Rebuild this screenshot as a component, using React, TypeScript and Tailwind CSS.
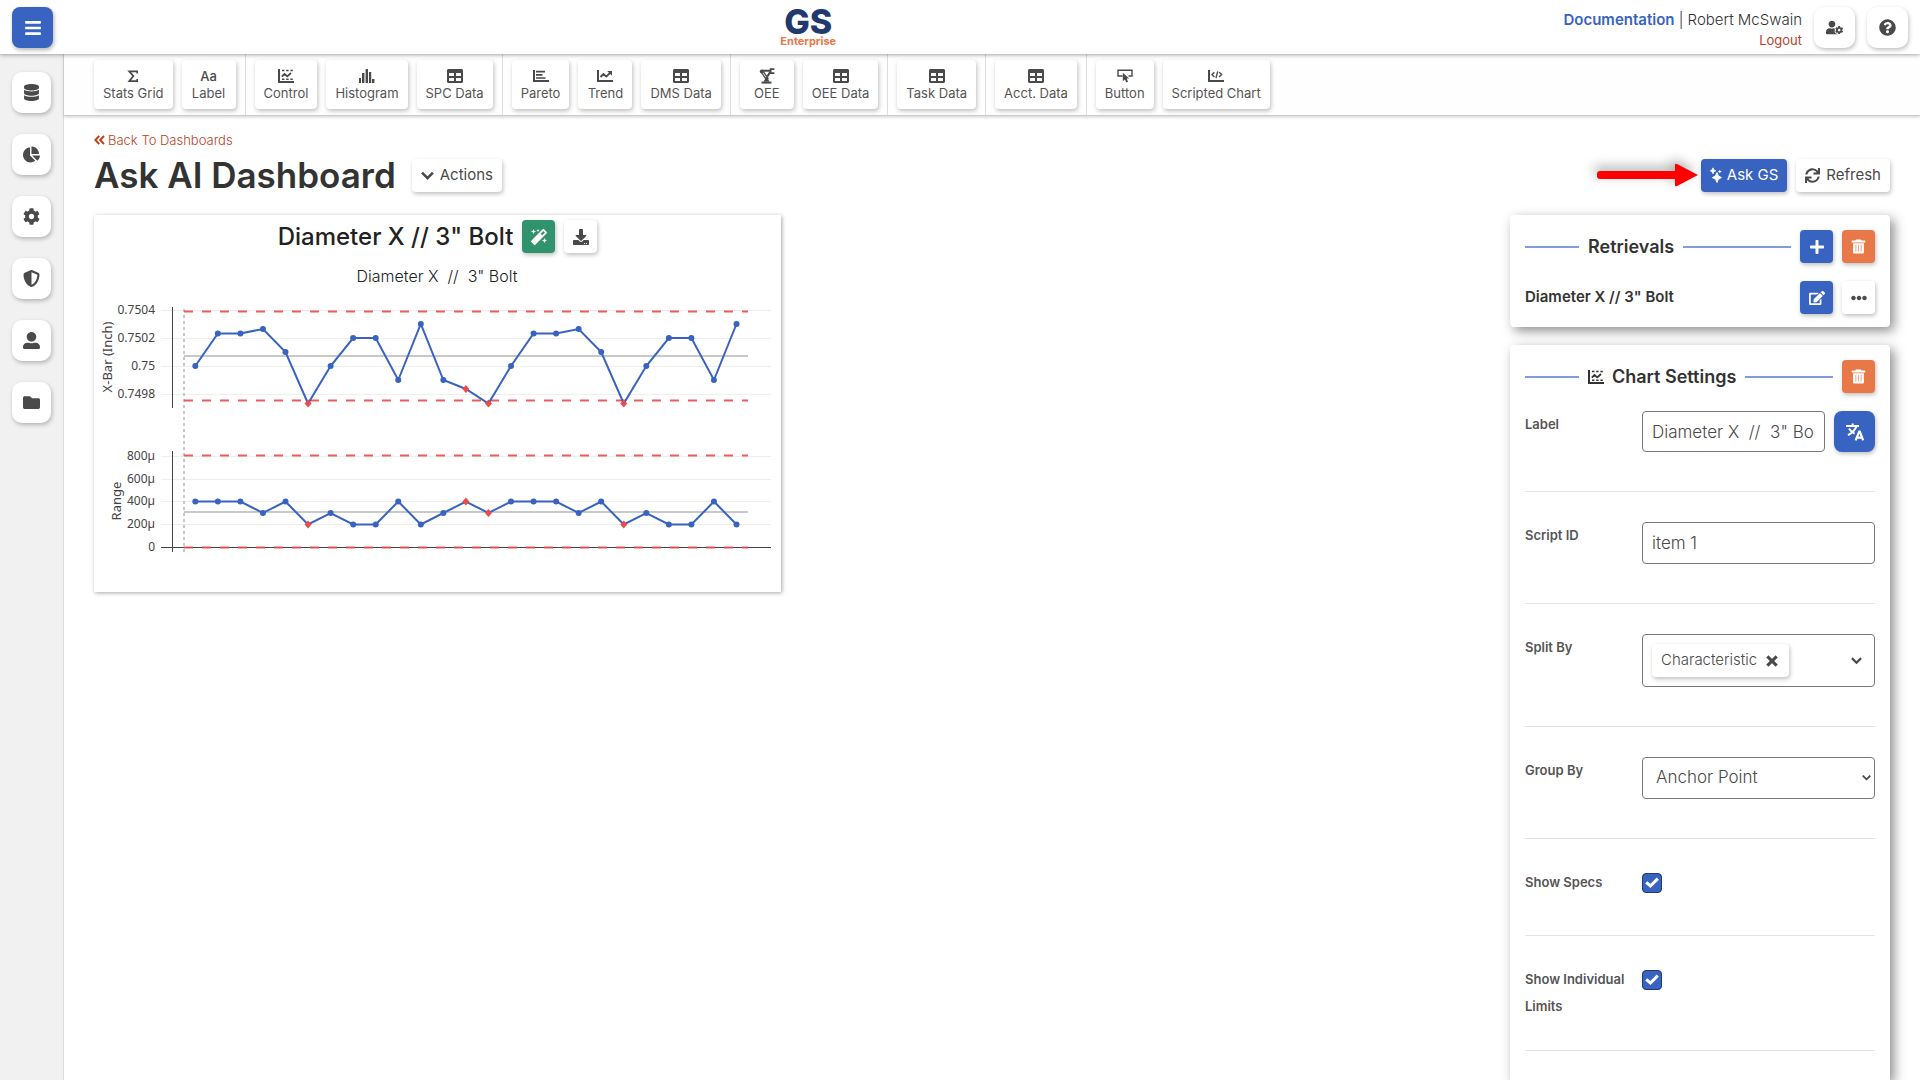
import type { ReactNode } from "react";
import {
  FaBars,
  FaChartPie,
  FaCog,
  FaDatabase,
  FaDownload,
  FaEdit,
  FaEllipsisH,
  FaFolder,
  FaMagic,
  FaPlus,
  FaQuestionCircle,
  FaSync,
  FaTable,
  FaUserAlt,
  FaUserCog,
} from "react-icons/fa";
import { FaShieldHalved } from "react-icons/fa6";

const SigmaIcon = () => (
  <svg width="16" height="16" viewBox="0 0 16 16" fill="none" stroke="currentColor" strokeWidth="1.7">
    <path d="M12.2 5.4V3.3H4.2L8.4 8.1L4.2 13.2H12.2V11" />
  </svg>
);

const ControlIcon = () => (
  <svg width="16" height="16" viewBox="0 0 16 16" fill="none" stroke="currentColor">
    <path d="M1 1V14H16" strokeWidth="2" />
    <path d="M4 2.5H16M4 11.2H16" strokeWidth="1.4" strokeDasharray="2.4 1.8" />
    <path d="M3.8 8.6L6.5 6L9.3 8.4L13 5" strokeWidth="1.8" />
  </svg>
);

const HistogramIcon = () => (
  <svg width="16" height="16" viewBox="0 0 16 16" fill="currentColor">
    <path d="M0 10h2v5H0zM3 5h2.4v10H3zM6.6 1h2.4v14H6.6zM10 4h2.2v11H10zM13 11h2.4v4H13z" />
  </svg>
);

const ParetoIcon = () => (
  <svg width="16" height="16" viewBox="0 0 16 16" fill="none" stroke="currentColor">
    <path d="M1 2V13H16" strokeWidth="2" />
    <path d="M3 3.6H12M3 6.8H9.5M3 10H12.5" strokeWidth="1.7" />
  </svg>
);

const TrendIcon = () => (
  <svg width="16" height="16" viewBox="0 0 16 16" fill="none" stroke="currentColor">
    <path d="M1 2V13H16" strokeWidth="2" />
    <path d="M3.5 9L6.5 6L9.3 8.6L13 5" strokeWidth="1.8" />
    <path d="M10.2 3H15V7.8Z" fill="currentColor" stroke="none" />
  </svg>
);

const RobotArmIcon = () => (
  <svg width="16" height="16" viewBox="0 0 16 16" fill="none" stroke="currentColor">
    <path d="M2.5 14.6H12.5" strokeWidth="2" />
    <path d="M4.5 13.8L6 11H9L10.5 13.8Z" fill="currentColor" stroke="none" />
    <path d="M2.6 4.6L7 11.2M4.4 3.6L8.6 9.8" strokeWidth="1.3" />
    <path d="M2.6 2.8H11M11 4.2L8.2 8.6" strokeWidth="2" />
    <path d="M15.4 1.2H11.6V5.2H15.4" strokeWidth="1.8" />
    <circle cx="2.8" cy="3.4" r="2" fill="currentColor" stroke="none" />
    <circle cx="7.8" cy="10.6" r="1.8" fill="currentColor" stroke="none" />
  </svg>
);

const ClickIcon = () => (
  <svg width="16" height="16" viewBox="0 0 16 16">
    <path d="M5.5 8H1V2.2H15V8H11.5" fill="none" stroke="currentColor" strokeWidth="1.4" />
    <path d="M5.8 4.8L12.2 10.6H9.7L11 13.8L9.4 14.6L7.9 11.5L5.8 13.2Z" fill="currentColor" />
  </svg>
);

const ScriptIcon = () => (
  <svg width="16" height="16" viewBox="0 0 16 16" fill="none" stroke="currentColor">
    <path d="M1 2V13H16" strokeWidth="2" />
    <path d="M6.4 4.2L4 6.6L6.4 9M11.2 4.2L13.6 6.6L11.2 9M9.7 3.4L8 10" strokeWidth="1.4" />
  </svg>
);

const TrashIcon = () => (
  <svg width="15" height="15" viewBox="0 0 16 16">
    <path d="M.8 1.6H4.6L5.6.6H10.4L11.4 1.6H15.2V3.6H.8Z" fill="currentColor" />
    <path d="M2.2 4.4H13.8V14.4Q13.8 15.4 12.8 15.4H3.2Q2.2 15.4 2.2 14.4Z" fill="currentColor" />
    <path d="M5.2 6.2V13.4M8 6.2V13.4M10.8 6.2V13.4" stroke="#f0a98a" strokeWidth="1.1" />
  </svg>
);

const SparkleIcon = () => (
  <svg width="12" height="16" viewBox="0 0 12 16" fill="currentColor">
    <path d="M7 5.5Q7.4 9.6 11.4 10.6Q7.4 11.6 7 15.5Q6.4 11.6 2.4 10.6Q6.4 9.6 7 5.5Z" stroke="currentColor" />
    <path d="M3 .8Q3.3 3.3 5.8 3.8Q3.3 4.3 3 6.8Q2.7 4.3.2 3.8Q2.7 3.3 3 .8Z" stroke="currentColor" strokeWidth=".8" />
    <path d="M9.8 2.4Q10 4.2 11.8 4.5Q10 4.8 9.8 6.6Q9.6 4.8 7.8 4.5Q9.6 4.2 9.8 2.4Z" />
  </svg>
);

const TranslateIcon = () => (
  <svg width="18" height="18" viewBox="0 0 18 18" fill="none" stroke="currentColor" strokeWidth="2">
    <path d="M0 3H13M6.6 .4V3M10.4 3.4Q8.6 8.6 2 12.2M3 5.6Q5 9 8.6 10.6" />
    <path d="M9.6 17.4L13.2 8.6H13.8L17.2 17.4M11 14.6H16" strokeWidth="2.2" />
  </svg>
);

const Chevron = ({ size, className = "" }: { size: number; className?: string }) => (
  <svg
    width={size}
    height={size}
    viewBox="0 0 12 12"
    fill="none"
    stroke="currentColor"
    strokeWidth="2.4"
    className={className}
  >
    <path d="M1 3.4L6 8.4L11 3.4" />
  </svg>
);

const CloseIcon = () => (
  <svg width="12" height="12" viewBox="0 0 11 11" stroke="currentColor" strokeWidth="2.8">
    <path d="M1.2 1.2L9.8 9.8M9.8 1.2L1.2 9.8" />
  </svg>
);

const BackIcon = () => (
  <svg width="11" height="10" viewBox="0 0 11 10" fill="none" stroke="currentColor" strokeWidth="2">
    <path d="M5.2 1L1.4 5L5.2 9M10 1L6.2 5L10 9" />
  </svg>
);

const navItems = [
  { name: "Data", icon: <FaDatabase /> },
  { name: "Dashboards", icon: <FaChartPie /> },
  { name: "Settings", icon: <FaCog /> },
  { name: "Security", icon: <FaShieldHalved /> },
  { name: "Users", icon: <FaUserAlt /> },
  { name: "Files", icon: <FaFolder /> },
];

const toolGroups: { name: string; icon: ReactNode }[][] = [
  [
    { name: "Stats Grid", icon: <SigmaIcon /> },
    { name: "Label", icon: <span className="text-[13px] leading-4 font-medium">Aa</span> },
  ],
  [
    { name: "Control", icon: <ControlIcon /> },
    { name: "Histogram", icon: <HistogramIcon /> },
    { name: "SPC Data", icon: <FaTable /> },
  ],
  [
    { name: "Pareto", icon: <ParetoIcon /> },
    { name: "Trend", icon: <TrendIcon /> },
    { name: "DMS Data", icon: <FaTable /> },
  ],
  [
    { name: "OEE", icon: <RobotArmIcon /> },
    { name: "OEE Data", icon: <FaTable /> },
  ],
  [{ name: "Task Data", icon: <FaTable /> }],
  [{ name: "Acct. Data", icon: <FaTable /> }],
  [
    { name: "Button", icon: <ClickIcon /> },
    { name: "Scripted Chart", icon: <ScriptIcon /> },
  ],
];

const xbarTicks = [
  { label: "0.7504", y: 95 },
  { label: "0.7502", y: 123 },
  { label: "0.75", y: 151 },
  { label: "0.7498", y: 179 },
];

const rangeTicks = [
  { label: "800µ", y: 241 },
  { label: "600µ", y: 264 },
  { label: "400µ", y: 286 },
  { label: "200µ", y: 309 },
  { label: "0", y: 332 },
];

const xbar = [
  151, 118.5, 118.5, 114, 137, 188.5, 151, 123, 123, 165, 109, 165, 174, 188.5, 151, 118.5, 118.5, 114, 137, 188.5,
  151, 123, 123, 165, 109,
];
const range = [
  286.5, 286.5, 286.5, 298, 286.5, 309.5, 298, 309.5, 309.5, 286.5, 309.5, 298, 286.5, 298, 286.5, 286.5, 286.5, 298,
  286.5, 309.5, 298, 309.5, 309.5, 286.5, 309.5,
];
const violations = [5, 12, 13, 19];

const pointX = (i: number) => 101.3 + i * 22.55;

const Series = ({ values }: { values: number[] }) => (
  <g>
    <polyline
      points={values.map((y, i) => `${pointX(i)},${y}`).join(" ")}
      fill="none"
      stroke="#3863c0"
      strokeWidth="2"
    />
    {values.map((y, i) =>
      violations.includes(i) ? (
        <path key={i} d={`M${pointX(i)} ${y - 4}l3.5 4l-3.5 4l-3.5 -4z`} fill="#ea4b4b" />
      ) : (
        <circle key={i} cx={pointX(i)} cy={y} r="3" fill="#3863c0" />
      ),
    )}
  </g>
);

const ControlChart = () => (
  <svg className="block w-full" viewBox="0 0 687 377" style={{ fontFamily: '"Noto Sans", sans-serif' }}>
    <text x="343" y="67" textAnchor="middle" fontSize="16" fontWeight="300" fill="#222" xmlSpace="preserve" fontFamily="Inter">
      {'Diameter X  //  3" Bolt'}
    </text>
    {[...xbarTicks, ...rangeTicks].map((tick) => (
      <g key={tick.label}>
        <path d={`M67 ${tick.y + 0.5}H677`} stroke="#eee" />
        <text x="61" y={tick.y + 4} textAnchor="end" fontSize="12" fill="#444">
          {tick.label}
        </text>
      </g>
    ))}
    <text transform="translate(18 142) rotate(-90)" textAnchor="middle" fontSize="13" fill="#444">
      X-Bar (Inch)
    </text>
    <text transform="translate(27 286) rotate(-90)" textAnchor="middle" fontSize="13" fill="#444">
      Range
    </text>
    <path d="M78.5 92V193M78.5 236V337M67 332.5H677" stroke="#444" />
    <path d="M90 94V337" stroke="#c8c8c8" strokeWidth="2" strokeDasharray="3 3" />
    <path d="M90 141H654M90 297H654" stroke="#c8c8c8" strokeWidth="2" />
    <path
      d="M90 96.5H654M90 185.5H654M90 240.5H654M90 332.5H654"
      stroke="#ea4b4b"
      strokeWidth="2"
      strokeDasharray="9 9"
      opacity=".9"
    />
    <Series values={xbar} />
    <Series values={range} />
  </svg>
);

const softShadow = "shadow-[1px_2px_4px_rgba(0,0,0,0.25)]";
const square = `flex size-[33px] items-center justify-center rounded-sm ${softShadow}`;
const panelShadow = "shadow-[4px_4px_12px_rgba(0,0,0,0.45)]";

const SettingRow = ({ label, id, children }: { label: string; id: string; children: ReactNode }) => (
  <div className="flex items-start border-t border-[#e2e2e2] py-[30px] first:border-t-0 first:pt-0">
    <label htmlFor={id} className="w-[117px] shrink-0 pr-3 text-[13px] leading-[27px] font-semibold text-[#555]">
      {label}
    </label>
    <div className="mb-[9px] min-w-0 flex-1">{children}</div>
  </div>
);

const CheckBox = ({ id }: { id: string }) => (
  <div className="flex h-[27px] items-center">
    <div className="relative size-5">
      <input
        id={id}
        type="checkbox"
        defaultChecked
        className="peer block size-5 appearance-none rounded-sm border border-[#777] checked:border-[#1f3a75] checked:bg-[#3863c0]"
      />
      <svg
        className="pointer-events-none absolute inset-0 hidden peer-checked:block"
        viewBox="0 0 20 20"
        fill="none"
        stroke="#fff"
        strokeWidth="3"
      >
        <path d="M4.2 9.4L8.4 13L15.8 5.6" />
      </svg>
    </div>
  </div>
);

const App = () => {
  return (
    <div
      className="flex h-screen flex-col overflow-hidden bg-white text-[#4a4a4a]"
      style={{ fontFamily: 'Inter, "Liberation Sans", sans-serif' }}
    >
      <header className="relative z-20 flex h-[54px] shrink-0 items-center justify-between bg-white px-3 pt-px shadow-[0_1px_4px_rgba(0,0,0,0.35)]">
        <button
          aria-label="Menu"
          className="flex size-[41px] items-center justify-center rounded-lg bg-[#3863c0] text-lg text-white shadow-[1px_2px_4px_rgba(0,0,0,0.3)]"
        >
          <FaBars />
        </button>
        <div className="flex flex-col items-center">
          <span className="text-[34px] leading-[28px] font-extrabold text-[#22396f]">GS</span>
          <span className="text-[11px] leading-[11px] font-bold text-[#ea7648]">Enterprise</span>
        </div>
        <div className="flex items-center justify-end gap-3">
          <div className="pt-[5px] text-right">
            <p className="text-[15px] leading-5 font-light text-[#333]">
              <a href="#" className="font-semibold text-[#3863c0]">
                Documentation
              </a>{" "}
              | Robert McSwain
            </p>
            <a href="#" className="block text-[13px] leading-5 text-[#b8431f]">
              Logout
            </a>
          </div>
          <button aria-label="Account" className={`flex size-[41px] items-center justify-center rounded-[10px] bg-white ${softShadow}`}>
            <FaUserCog size={17} />
          </button>
          <button aria-label="Help" className={`flex size-[41px] items-center justify-center rounded-[10px] bg-white ${softShadow}`}>
            <FaQuestionCircle size={17} />
          </button>
        </div>
      </header>

      <div className="flex min-h-0 flex-1">
        <nav className="flex w-16 shrink-0 flex-col gap-[21px] border-r border-[#ddd] bg-[#f1f1f1] pt-[18px] pl-3">
          {navItems.map((item) => (
            <button
              key={item.name}
              aria-label={item.name}
              className={`flex h-[41px] w-[39px] items-center justify-center rounded-[10px] bg-white text-[17px] ${softShadow}`}
            >
              {item.icon}
            </button>
          ))}
        </nav>

        <div className="flex min-w-0 flex-1 flex-col">
          <div className="flex h-[62px] shrink-0 border-b border-[#ccc] bg-[#fefefe] pl-[21px] shadow-[0_1px_3px_rgba(0,0,0,0.2)]">
            {toolGroups.map((group) => (
              <div
                key={group[0].name}
                className="flex items-center gap-[9px] border-r border-[#ddd] px-[9px] last:border-r-0"
              >
                {group.map((tool) => (
                  <button
                    key={tool.name}
                    className={`flex h-[49px] min-w-[54px] flex-col items-center justify-center gap-px rounded-sm bg-white px-[9px] text-[13px] leading-[17px] text-[#555] ${softShadow}`}
                  >
                    <span className="flex h-4 items-center text-base text-[#4a4a4a]">{tool.icon}</span>
                    {tool.name}
                  </button>
                ))}
              </div>
            ))}
          </div>

          <main className="flex min-h-0 flex-1 flex-col px-[30px] pt-[14px]">
            <a href="#" className="flex items-center gap-[3px] text-[13px] leading-5 font-light text-[#b8431f]">
              <BackIcon />
              Back To Dashboards
            </a>
            <div className="flex items-center justify-between py-1">
              <div className="flex items-center gap-4">
                <h1 className="text-[35px] leading-[42px] font-semibold text-[#333]">Ask AI Dashboard</h1>
                <button className={`flex h-[33px] items-center gap-[6px] rounded-sm bg-white px-[9px] text-[15px] ${softShadow}`}>
                  <Chevron size={13} />
                  Actions
                </button>
              </div>
              <div className="flex items-center gap-[9px]">
                <svg
                  width="101"
                  height="24"
                  viewBox="0 0 101 24"
                  fill="#f00"
                  className="-mr-[6px] overflow-visible drop-shadow-[-3px_-4px_6px_rgba(0,0,0,0.35)]"
                >
                  <path d="M3 8H78V2Q78 0 80 1L101 12L80 23Q78 24 78 22V16H3Q0 16 0 13V11Q0 8 3 8Z" />
                </svg>
                <button className={`flex h-[33px] items-center gap-[5px] rounded-sm bg-[#3863c0] px-[9px] text-[15px] text-white ${softShadow}`}>
                  <SparkleIcon />
                  Ask GS
                </button>
                <button className={`flex h-[33px] items-center gap-[6px] rounded-sm bg-white px-[9px] text-[15px] ${softShadow}`}>
                  <FaSync size={15} />
                  Refresh
                </button>
              </div>
            </div>

            <div className="flex min-h-0 flex-1 items-start justify-between pt-[15px]">
              <section className="relative w-[687px] bg-white shadow-[1px_1px_4px_rgba(0,0,0,0.35)]">
                <div className="absolute inset-x-0 top-[5px] flex items-center justify-center gap-[9px]">
                  <h2 className="text-2xl font-medium text-[#222]">Diameter X // 3" Bolt</h2>
                  <button aria-label="Format" className={`${square} bg-[#31936d] text-white`}>
                    <FaMagic />
                  </button>
                  <button aria-label="Download" className={`${square} bg-white`}>
                    <FaDownload />
                  </button>
                </div>
                <ControlChart />
              </section>

              <aside className="flex w-[380px] flex-col gap-[18px] self-stretch">
                <section className={`rounded-sm bg-white px-[15px] pt-[15px] pb-[13px] ${panelShadow}`}>
                  <div className="flex items-center gap-[9px]">
                    <span className="h-[2px] w-[54px] bg-[#809cdb]" />
                    <h3 className="text-lg leading-6 font-semibold text-[#333]">Retrievals</h3>
                    <span className="h-[2px] flex-1 bg-[#809cdb]" />
                    <button aria-label="Add retrieval" className={`${square} bg-[#3863c0] text-white`}>
                      <FaPlus />
                    </button>
                    <button aria-label="Delete retrievals" className={`${square} bg-[#e87848] text-white`}>
                      <TrashIcon />
                    </button>
                  </div>
                  <div className="mt-[18px] flex items-center gap-[9px]">
                    <p className="flex-1 text-[15px] font-semibold text-[#333]">Diameter X // 3" Bolt</p>
                    <button aria-label="Edit" className={`${square} bg-[#3863c0] text-white`}>
                      <FaEdit />
                    </button>
                    <button aria-label="More" className={`${square} bg-white`}>
                      <FaEllipsisH />
                    </button>
                  </div>
                </section>

                <section className={`min-h-0 flex-1 rounded-t-sm bg-white px-[15px] pt-[15px] ${panelShadow}`}>
                  <div className="mb-[18px] flex items-center gap-[9px]">
                    <span className="h-[2px] w-[54px] bg-[#809cdb]" />
                    <h3 className="flex items-center gap-2 text-lg leading-6 font-semibold text-[#333]">
                      <ControlIcon />
                      Chart Settings
                    </h3>
                    <span className="h-[2px] flex-1 bg-[#809cdb]" />
                    <button aria-label="Delete chart" className={`${square} bg-[#e87848] text-white`}>
                      <TrashIcon />
                    </button>
                  </div>
                  <div className="border-b border-[#e2e2e2]">
                    <SettingRow label="Label" id="label">
                      <div className="flex gap-[9px]">
                        <input
                          id="label"
                          defaultValue={'Diameter X  //  3" Bolt'}
                          className="h-[41px] w-full min-w-0 rounded-sm border border-[#777] px-[9px] text-[17px] font-light"
                        />
                        <button
                          aria-label="Translate"
                          className={`flex size-[41px] shrink-0 items-center justify-center rounded-lg bg-[#3863c0] text-white ${softShadow}`}
                        >
                          <TranslateIcon />
                        </button>
                      </div>
                    </SettingRow>
                    <SettingRow label="Script ID" id="script-id">
                      <input
                        id="script-id"
                        defaultValue="item 1"
                        className="block h-[42px] w-full rounded-sm border border-[#777] px-[9px] text-[17px] font-light"
                      />
                    </SettingRow>
                    <SettingRow label="Split By" id="split-by">
                      <div className="flex h-[53px] items-center justify-between rounded-sm border border-[#777] pr-3 pl-[9px]">
                        <button
                          id="split-by"
                          className={`flex h-[33px] items-center gap-[9px] rounded-sm bg-white pr-[11px] pl-[9px] text-[15px] font-light ${softShadow}`}
                        >
                          Characteristic
                          <CloseIcon />
                        </button>
                        <Chevron size={11} />
                      </div>
                    </SettingRow>
                    <SettingRow label="Group By" id="group-by">
                      <div className="relative">
                        <select
                          id="group-by"
                          className="block h-[42px] w-full appearance-none rounded-sm border border-[#777] bg-white px-[13px] text-[17px] font-light"
                        >
                          <option>Anchor Point</option>
                          <option>Characteristic</option>
                        </select>
                        <Chevron size={9} className="pointer-events-none absolute top-4 right-1" />
                      </div>
                    </SettingRow>
                    <SettingRow label="Show Specs" id="show-specs">
                      <CheckBox id="show-specs" />
                    </SettingRow>
                    <SettingRow label="Show Individual Limits" id="show-limits">
                      <CheckBox id="show-limits" />
                    </SettingRow>
                  </div>
                </section>
              </aside>
            </div>
          </main>
        </div>
      </div>
    </div>
  );
};

export default App;
